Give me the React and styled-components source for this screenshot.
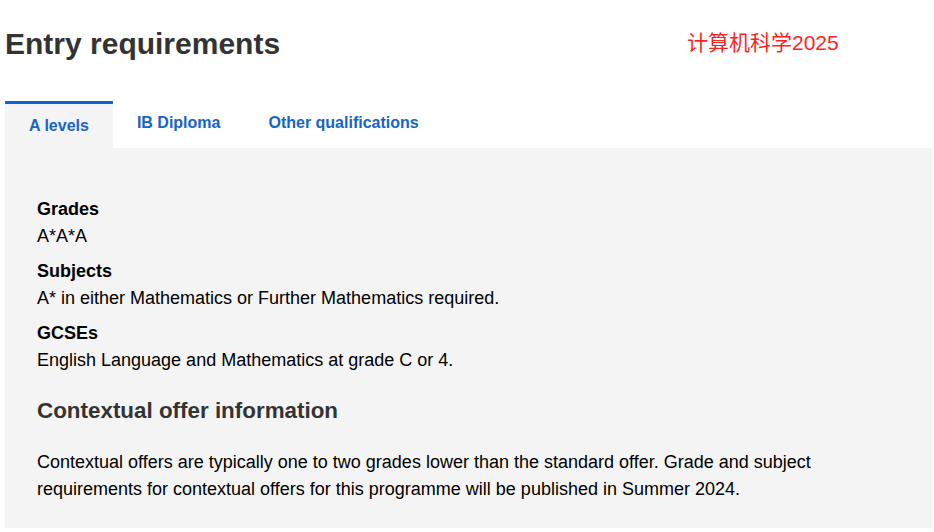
import styled, { createGlobalStyle } from "styled-components"

const GlobalStyle = createGlobalStyle`
    body {
        margin: 0;
        background: #fff;
        font-family: "Liberation Sans", Arial, sans-serif;
        color: #000;
    }
`

const Page = styled.div`
    padding: 0 2px 0 5px;
`

const Header = styled.header`
    display: grid;
    grid-template-columns: 682px 1fr;
    align-items: center;
    padding-top: 24px;
    height: 40px;
`

const Title = styled.h2`
    margin: 0;
    font-size: 30px;
    line-height: 36px;
    font-weight: bold;
    color: #333;
`

const Badge = styled.span`
    font-family: "Liberation Sans", "Noto Sans CJK SC", sans-serif;
    font-size: 21px;
    color: #ff1f1f;
    margin-top: -6px;
`

const TabList = styled.nav`
    display: flex;
    margin-top: 37px;
`

const Tab = styled.a`
    display: block;
    box-sizing: border-box;
    font-size: 16px;
    font-weight: bold;
    line-height: 20px;
    color: #1565c8;
    background: ${p => (p.$active ? "#f4f4f4" : "transparent")};
    border-top: ${p => (p.$active ? "3px solid #0e63cf" : "none")};
    padding: 12px 24px 0;
    height: 47px;
    cursor: pointer;
`

const Panel = styled.section`
    background: #f4f4f4;
    padding: 48px 32px 25px;
`

const Group = styled.dl`
    margin: 0 0 8px;
    font-size: 18px;
    line-height: 27px;
`

const Term = styled.dt`
    font-weight: bold;
`

const Detail = styled.dd`
    margin: 0;
`

const SubHeading = styled.h3`
    margin: 24px 0 25px;
    font-size: 22.4px;
    line-height: 26px;
    color: #333;
`

const Text = styled.p`
    margin: 0;
    font-size: 18px;
    line-height: 27px;
`

const requirements = [
    { term: "Grades", detail: "A*A*A" },
    { term: "Subjects", detail: "A* in either Mathematics or Further Mathematics required." },
    { term: "GCSEs", detail: "English Language and Mathematics at grade C or 4." },
]

const tabs = ["A levels", "IB Diploma", "Other qualifications"]

const App = () => {
    return (
        <Page>
            <GlobalStyle />
            <Header>
                <Title>Entry requirements</Title>
                <Badge>计算机科学2025</Badge>
            </Header>
            <TabList>
                {tabs.map((t, i) => (
                    <Tab key={t} $active={i === 0}>{t}</Tab>
                ))}
            </TabList>
            <Panel>
                {requirements.map(r => (
                    <Group key={r.term}>
                        <Term>{r.term}</Term>
                        <Detail>{r.detail}</Detail>
                    </Group>
                ))}
                <SubHeading>Contextual offer information</SubHeading>
                <Text>
                    Contextual offers are typically one to two grades lower than the standard offer. Grade and subject
                    requirements for contextual offers for this programme will be published in Summer 2024.
                </Text>
            </Panel>
        </Page>
    )
}

export default App
